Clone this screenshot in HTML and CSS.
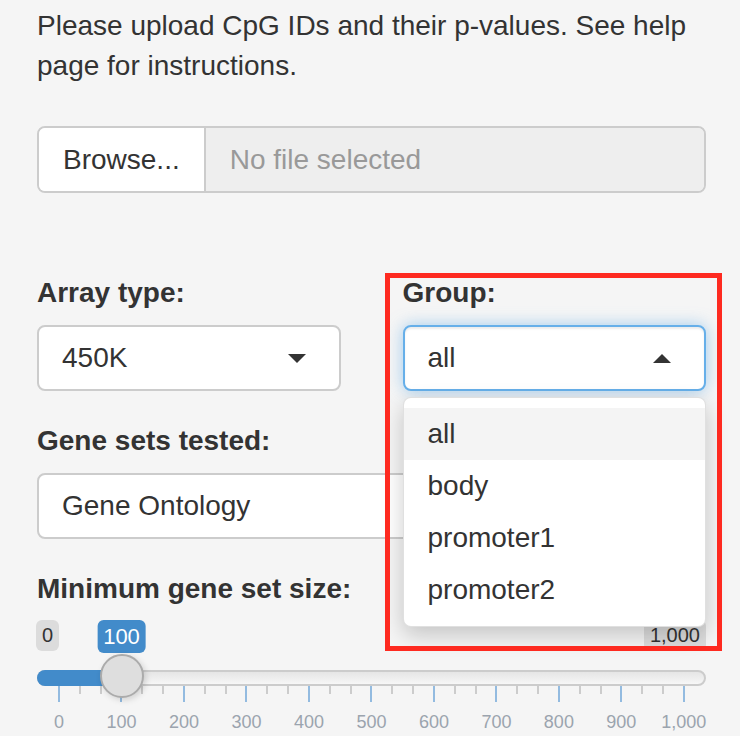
FILE: index.html
```html
<!DOCTYPE html>
<html>
<head>
<meta charset="utf-8">
<link rel="stylesheet" href="styles.css">
</head>
<body>
<div class="panel">
  <p class="intro">Please upload CpG IDs and their p-values. See help page for instructions.</p>
  <div class="file-input">
    <span class="browse">Browse...</span>
    <span class="file-name">No file selected</span>
  </div>
  <div class="row">
    <div class="col">
      <div class="form-group">
        <label class="label">Array type:</label>
        <div class="select"><span>450K</span><span class="caret caret-down"></span></div>
      </div>
    </div>
    <div class="col col-group">
      <div class="form-group">
        <label class="label">Group:</label>
        <div class="select-wrap">
          <div class="select select-focused"><span>all</span><span class="caret caret-up"></span></div>
          <div class="dropdown">
            <div class="option option-active">all</div>
            <div class="option">body</div>
            <div class="option">promoter1</div>
            <div class="option">promoter2</div>
          </div>
        </div>
      </div>
      <div class="highlight"></div>
    </div>
  </div>
  <div class="form-group">
    <label class="label">Gene sets tested:</label>
    <div class="select"><span>Gene Ontology</span><span class="caret caret-down"></span></div>
  </div>
  <div class="form-group">
    <label class="label label-slider">Minimum gene set size:</label>
    <div class="slider" style="--pos: 0.1">
      <div class="slider-labels">
        <span class="irs-min">0</span>
        <span class="irs-single">100</span>
        <span class="irs-max">1,000</span>
      </div>
      <div class="track">
        <div class="bar"></div>
        <div class="handle"></div>
      </div>
      <div class="grid">
        <div class="tick major"><span class="pol"></span><span class="grid-text">0</span></div>
        <div class="tick"><span class="pol"></span></div>
        <div class="tick"><span class="pol"></span></div>
        <div class="tick major"><span class="pol"></span><span class="grid-text">100</span></div>
        <div class="tick"><span class="pol"></span></div>
        <div class="tick"><span class="pol"></span></div>
        <div class="tick major"><span class="pol"></span><span class="grid-text">200</span></div>
        <div class="tick"><span class="pol"></span></div>
        <div class="tick"><span class="pol"></span></div>
        <div class="tick major"><span class="pol"></span><span class="grid-text">300</span></div>
        <div class="tick"><span class="pol"></span></div>
        <div class="tick"><span class="pol"></span></div>
        <div class="tick major"><span class="pol"></span><span class="grid-text">400</span></div>
        <div class="tick"><span class="pol"></span></div>
        <div class="tick"><span class="pol"></span></div>
        <div class="tick major"><span class="pol"></span><span class="grid-text">500</span></div>
        <div class="tick"><span class="pol"></span></div>
        <div class="tick"><span class="pol"></span></div>
        <div class="tick major"><span class="pol"></span><span class="grid-text">600</span></div>
        <div class="tick"><span class="pol"></span></div>
        <div class="tick"><span class="pol"></span></div>
        <div class="tick major"><span class="pol"></span><span class="grid-text">700</span></div>
        <div class="tick"><span class="pol"></span></div>
        <div class="tick"><span class="pol"></span></div>
        <div class="tick major"><span class="pol"></span><span class="grid-text">800</span></div>
        <div class="tick"><span class="pol"></span></div>
        <div class="tick"><span class="pol"></span></div>
        <div class="tick major"><span class="pol"></span><span class="grid-text">900</span></div>
        <div class="tick"><span class="pol"></span></div>
        <div class="tick"><span class="pol"></span></div>
        <div class="tick major"><span class="pol"></span><span class="grid-text">1,000</span></div>
      </div>
    </div>
  </div>
</div>
</body>
</html>
```

FILE: styles.css
```css
html, body {
  margin: 0;
  padding: 0;
}

body {
  background: #f5f5f5;
  font-family: "Liberation Sans", Arial, sans-serif;
  font-size: 28px;
  line-height: 40px;
  color: #333;
  overflow: hidden;
}

.panel {
  width: 669px;
  padding: 6px 0 0 37px;
}

.intro {
  margin: 0 0 40px;
}

.file-input {
  display: flex;
  height: 67px;
  box-sizing: border-box;
  border: 2px solid #ccc;
  border-radius: 8px;
  overflow: hidden;
  margin-bottom: 80px;
}

.browse {
  display: flex;
  align-items: center;
  padding: 0 24px;
  background: #fff;
  border-right: 2px solid #ccc;
}

.file-name {
  flex: 1;
  display: flex;
  align-items: center;
  padding: 0 24px;
  background: #eee;
  color: #999;
}

.row {
  display: flex;
  gap: 62px;
}

.col {
  flex: 1;
  min-width: 0;
}

.col-group {
  position: relative;
}

.form-group {
  margin-bottom: 30px;
}

.label {
  display: block;
  font-weight: bold;
  margin-bottom: 12px;
}

.label-slider {
  margin-bottom: 11px;
}

.select {
  display: flex;
  align-items: center;
  justify-content: space-between;
  height: 66px;
  box-sizing: border-box;
  padding: 0 33px 0 23px;
  background: #fff;
  border: 2px solid #ccc;
  border-radius: 8px;
}

.select-focused {
  border-color: #66afe9;
  box-shadow: inset 0 2px 2px rgba(0, 0, 0, 0.075), 0 0 16px rgba(102, 175, 233, 0.6);
  padding-left: 23px;
}

.caret {
  width: 0;
  height: 0;
  border-left: 9px solid transparent;
  border-right: 9px solid transparent;
}

.caret-down {
  border-top: 9px solid #333;
}

.caret-up {
  border-bottom: 9px solid #333;
}

.select-wrap {
  position: relative;
}

.dropdown {
  position: absolute;
  z-index: 10;
  top: calc(100% + 6px);
  left: 0;
  right: 0;
  padding: 10px 0;
  background: #fff;
  border: 1px solid rgba(0, 0, 0, 0.12);
  border-radius: 8px;
  box-shadow: 0 8px 22px rgba(0, 0, 0, 0.2);
}

.option {
  padding: 6px 24px;
}

.option-active {
  background: #f4f4f4;
}

.highlight {
  position: absolute;
  z-index: 20;
  left: -18px;
  top: 0;
  width: 337px;
  height: 378px;
  box-sizing: border-box;
  border: 5px solid #fe2a20;
  pointer-events: none;
}

.slider {
  position: relative;
}

.slider-labels {
  position: relative;
  display: flex;
  justify-content: space-between;
  align-items: flex-start;
  height: 33px;
}

.irs-min,
.irs-max {
  margin-left: -1px;
  padding: 2px 6px;
  font-size: 20px;
  line-height: 26.7px;
  background: rgba(0, 0, 0, 0.1);
  border-radius: 6px;
  color: #333;
}

.irs-max {
  margin-left: 0;
}

.irs-single {
  position: absolute;
  top: 0;
  left: calc(22px + var(--pos) * (100% - 44px));
  transform: translateX(-50%);
  padding: 2px 6px;
  font-size: 22px;
  line-height: 29.3px;
  background: #428bca;
  color: #fff;
  border-radius: 6px;
}

.track {
  position: relative;
  height: 16px;
  margin-top: 17px;
  box-sizing: border-box;
  border: 2px solid #ccc;
  border-radius: 16px;
  background: linear-gradient(to bottom, #ddd -50%, #fff 150%);
}

.bar {
  position: absolute;
  top: -2px;
  left: -2px;
  height: 16px;
  width: calc(22px + var(--pos) * (100% - 40px));
  background: #428bca;
  border-radius: 16px 0 0 16px;
}

.handle {
  position: absolute;
  top: -18px;
  left: calc(-2px + var(--pos) * (100% - 40px));
  width: 44px;
  height: 44px;
  box-sizing: border-box;
  border: 2px solid #ababab;
  border-radius: 50%;
  background: #dedede;
  box-shadow: 2px 2px 6px rgba(0, 0, 0, 0.15);
}

.grid {
  display: flex;
  justify-content: space-between;
  margin: 0 22px;
}

.tick {
  width: 0;
  display: flex;
  flex-direction: column;
  align-items: center;
}

.pol {
  display: block;
  width: 2px;
  height: 8px;
  background: #ccc;
}

.major .pol {
  height: 16px;
  background: #93bbe0;
}

.grid-text {
  margin-top: 10px;
  font-size: 18px;
  line-height: 20px;
  color: #9ba4ae;
  white-space: nowrap;
}
```
